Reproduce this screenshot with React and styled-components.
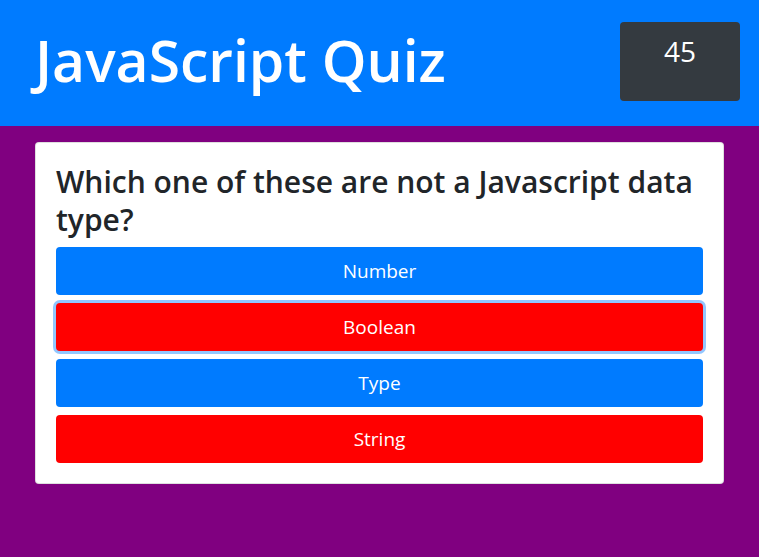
import React from "react";
import styled, { createGlobalStyle } from "styled-components";

const GlobalStyle = createGlobalStyle`
	html, body {
		margin: 0;
		padding: 0;
		background: #800080;
		font-family: "Open Sans", "Noto Sans", sans-serif;
	}
	* {
		box-sizing: border-box;
	}
`;

const answers = [
	{ label: "Number", wrong: false },
	{ label: "Boolean", wrong: true, focused: true },
	{ label: "Type", wrong: false },
	{ label: "String", wrong: true },
];

function App() {
	return (
		<Page>
			<GlobalStyle />
			<Header>
				<Title>JavaScript Quiz</Title>
				<Timer>45</Timer>
			</Header>
			<Main>
				<Card>
					<Question>Which one of these are not a Javascript data type?</Question>
					<Answers>
						{answers.map((answer) => (
							<Answer
								key={answer.label}
								$wrong={answer.wrong}
								$focused={answer.focused}
							>
								{answer.label}
							</Answer>
						))}
					</Answers>
				</Card>
			</Main>
		</Page>
	);
}

const Page = styled.div`
	min-height: 557px;
	background: #800080;
`;

const Header = styled.header`
	height: 126px;
	background: #007bff;
	display: flex;
	justify-content: space-between;
	align-items: flex-start;
	padding: 22px 19px 0 35px;
`;

const Title = styled.h1`
	margin: 0;
	padding-top: 4px;
	color: #fff;
	font-size: 57px;
	font-weight: 600;
	line-height: 1.2;
`;

const Timer = styled.div`
	width: 120px;
	height: 79px;
	background: #343a40;
	border-radius: 4px;
	color: #fff;
	font-size: 28px;
	line-height: 1;
	text-align: center;
	padding-top: 15px;
`;

const Main = styled.main`
	padding: 16px 35px 0 35px;
`;

const Card = styled.section`
	background: #fff;
	border: 1px solid rgba(0, 0, 0, 0.125);
	border-radius: 4px;
	padding: 20px;
`;

const Question = styled.h3`
	margin: 0 0 9px;
	color: #212529;
	font-size: 30px;
	font-weight: 600;
	line-height: 37.5px;
`;

const Answers = styled.div`
	display: flex;
	flex-direction: column;
	gap: 8px;
`;

const Answer = styled.button`
	height: 48px;
	width: 100%;
	border: none;
	border-radius: 4px;
	font-family: inherit;
	font-size: 19px;
	color: #fff;
	background: ${(p) => (p.$wrong ? "#ff0000" : "#007bff")};
	box-shadow: ${(p) =>
		p.$focused ? "0 0 0 3px rgba(38, 143, 255, 0.5)" : "none"};
	cursor: pointer;
`;

export default App;
